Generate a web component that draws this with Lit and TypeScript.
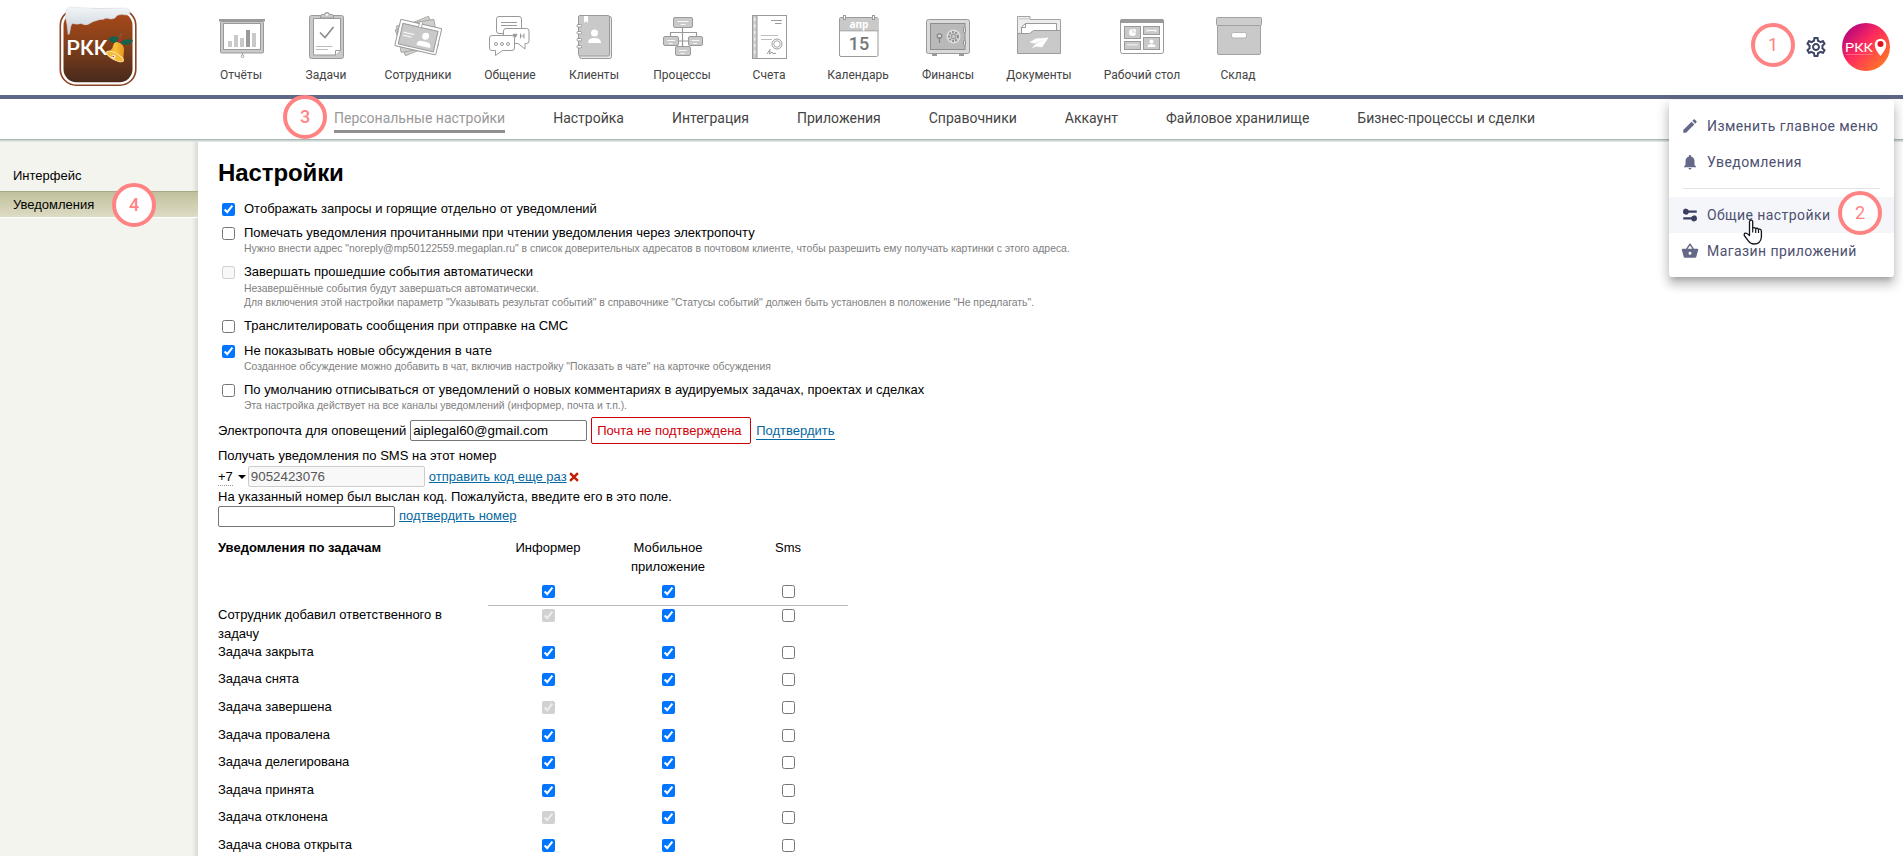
import { LitElement, html, css, svg, nothing, TemplateResult } from "lit";
import { customElement, property } from "lit/decorators.js";
import { classMap } from "lit/directives/class-map.js";

const F = "#c9c9c9";
const S = "#9a9a9a";

interface NavItem {
  label: string;
  cx: number;
  art: TemplateResult;
}

/* The icon artwork shares one coordinate space; each icon is cropped around its own centre. */
const NAV: NavItem[] = [
  {
    label: "Отчёты",
    cx: 241,
    art: svg`<rect x="220.5" y="21.5" width="43" height="31.5" rx="1" fill=${F} stroke=${S}/>
      <rect x="223.5" y="23.500" width="37" height="26" fill="#fff" stroke=${S}/>
      <rect x="219" y="19" width="46" height="2.500" fill=${S}/>
      <path d="M228 41h4v6h-4zM234 35h4v12h-4zM240 38h4v9h-4zM252 33h4v14h-4z" fill=${F}/>
      <path d="M246 30h4v17h-4z" fill=${S}/>
      <path d="M242.500 53v2" stroke=${S}/><circle cx="242.500" cy="56.300" r="1.300" fill="#fff" stroke=${S} stroke-width=".9"/>`,
  },
  {
    label: "Задачи",
    cx: 326,
    art: svg`<rect x="309.500" y="15.500" width="34" height="43" rx="2" fill=${F} stroke=${S}/>
      <path d="M313.500 18.500h27v32l-5 4.500h-22z" fill="#fff" stroke=${S}/>
      <path d="M335.500 55v-4.500h5" fill="#fff" stroke=${S}/>
      <path d="M320.500 18v-2q0-1.500 2-1.500h2q0-2 2.500-2t2.500 2h2q2 0 2 1.500v2z" fill=${F} stroke=${S}/>
      <circle cx="327" cy="14.800" r="1" fill="#fff"/>
      <path d="M320 32.500l5 5 8.500-10.500" fill="none" stroke="#8c8c8c" stroke-width="1.700"/>
      <path d="M316 46.500h16.500M316 49.500h12" stroke="#bbb"/>`,
  },
  {
    label: "Сотрудники",
    cx: 418,
    art: svg`<g stroke="#a6aaa2" fill="#cfcfcf"><rect x="399" y="22" width="36" height="28" rx="1" transform="rotate(-22 417 36)"/>
      <rect x="398.500" y="22.500" width="38" height="27" rx="1" transform="rotate(-10 417 36)"/></g>
      <g transform="rotate(13 418 36)"><rect x="397.500" y="23.500" width="42" height="27" rx="1" fill="#fff" stroke=${S}/>
      <rect x="400.500" y="27" width="36" height="21" fill=${F} stroke=${S}/>
      <path d="M403 35.500h11M403 38.500h9" stroke="#f4f4f4" stroke-width="1.200"/>
      <circle cx="425.500" cy="34.500" r="3.500" fill="#fff"/><path d="M418.500 45q0-5 4-5h6q4 0 4 5z" fill="#fff"/>
      <path d="M416.500 22v5q1.500 1.500 3 0v-5" fill="#fff" stroke=${S} stroke-width=".8"/></g>`,
  },
  {
    label: "Общение",
    cx: 510,
    art: svg`<rect x="496.500" y="16.500" width="25" height="17" rx="2.500" fill="#fff" stroke=${S}/>
      <path d="M501 22.500h16M501 25.500h16" stroke=${S}/>
      <path d="M506 28.500h20.500q2.500 0 2.500 2.500v10q0 2.500-2.500 2.500h-1.500v5.500l-7-5.500h-12q-2.500 0-2.500-2.500v-10q0-2.500 2.500-2.500z" fill="#fff" stroke=${S}/>
      <path d="M512.800 34.200q1.300-1.400 2.200 0 .9-1.400 2.200 0 .6 1.300-2.200 3.600-2.800-2.300-2.200-3.600z" fill=${S}/>
      <path d="M507.500 35.500h3M520.500 33.500v5M524 33.500v5M520.500 36h3.500" stroke=${S}/>
      <path d="M492 35.500h20q2.500 0 2.500 2.500v10q0 2.500-2.500 2.500h-9.500l-7 5v-5h-3.500q-2.500 0-2.500-2.500v-10q0-2.500 2.500-2.500z" fill="#fff" stroke=${S}/>
      <g fill="none" stroke=${S}><circle cx="496" cy="44" r="1.500"/><circle cx="502" cy="44" r="1.500"/><circle cx="508" cy="44" r="1.500"/></g>`,
  },
  {
    label: "Клиенты",
    cx: 594,
    art: svg`<rect x="579.500" y="16.500" width="32" height="42" rx="2" fill="#e8e8e8" stroke=${S}/>
      <rect x="578.500" y="15.500" width="31" height="40.500" rx="1.500" fill=${F} stroke=${S}/>
      <path d="M584 16h4v7l-2-1.800-2 1.800z" fill="#fff"/>
      <g fill="#fff" stroke=${S}><rect x="577" y="24.500" width="4.500" height="2.500" rx="1"/><rect x="577" y="31.500" width="4.500" height="2.500" rx="1"/><rect x="577" y="38.500" width="4.500" height="2.500" rx="1"/><rect x="577" y="45.500" width="4.500" height="2.500" rx="1"/></g>
      <circle cx="594.500" cy="33" r="3.500" fill="#fff"/><path d="M588 43q0-5 6.500-5t6.500 5z" fill="#fff"/>`,
  },
  {
    label: "Процессы",
    cx: 682,
    art: svg`<path d="M682.500 27v20M670.500 37v-4.500h26v4.500M678 41h10" fill="none" stroke=${S} stroke-width="1.200"/>
      <g fill=${F} stroke=${S}><rect x="673.500" y="17.500" width="19" height="10" rx="1.500"/><rect x="663.500" y="36.500" width="15" height="9" rx="1.500"/><rect x="688.500" y="36.500" width="14" height="9" rx="1.500"/><rect x="675.500" y="46.500" width="15" height="9" rx="1.500"/></g>
      <path d="M677.500 21.500h11M680.500 24.500h5M667 40.500h8M668.500 43.500h4M691.500 40.500h8M693 43.500h4M679 50.500h8M680.500 53.500h4" stroke="#f6f6f6"/>`,
  },
  {
    label: "Счета",
    cx: 769,
    art: svg`<rect x="752.500" y="15.500" width="34" height="43" fill="#fff" stroke=${S}/>
      <rect x="752.500" y="15.500" width="4.500" height="43" fill=${F} stroke=${S}/>
      <path d="M754.800 18v39" stroke="#fff" stroke-dasharray="3 3.500"/>
      <path d="M771 20.500h11M775 23.500h6.500" stroke=${S}/><path d="M761 35.500h17M761 39.500h11" stroke="#bdbdbd"/>
      <circle cx="777" cy="44" r="5" fill="#fff" stroke=${S}/><circle cx="777" cy="44" r="3.200" fill="none" stroke="#ababab"/>
      <path d="M767 54l3-4.500-.5 4.500 2.500-2 1 1.700 3-.5" fill="none" stroke=${S}/>`,
  },
  {
    label: "Календарь",
    cx: 858,
    art: svg`<rect x="839.500" y="17.500" width="38.500" height="39" rx="1.500" fill="#fff" stroke=${S}/>
      <path d="M840 18h37.500v12.500h-37.500z" fill=${F}/><path d="M840 30.800h38" stroke=${S}/>
      <g fill="#fff" stroke=${S}><rect x="843.500" y="15.500" width="2" height="4"/><rect x="872.500" y="15.500" width="2" height="4"/></g>
      <text x="859" y="28" class="cal-m">апр</text><text x="859" y="50" class="cal-d">15</text>`,
  },
  {
    label: "Финансы",
    cx: 948,
    art: svg`<path d="M932 53.500h5v2.500h-5zM959 53.500h5v2.500h-5z" fill=${S}/>
      <rect x="926.500" y="19.500" width="43" height="34" rx="2" fill="#dadada" stroke=${S}/>
      <rect x="930.500" y="23.500" width="34.500" height="26" fill="#b9b9b9" stroke="#8e8e8e"/>
      <circle cx="953.500" cy="36.500" r="7" fill="#dedede"/><circle cx="953.500" cy="36.500" r="4.500" fill="none" stroke="#8e8e8e" stroke-width="2" stroke-dasharray="2 1.200"/><circle cx="953.500" cy="36.500" r="2.500" fill="#c4c4c4" stroke="#8e8e8e"/>
      <circle cx="939.500" cy="36" r="2.200" fill="#dedede" stroke="#858585" stroke-width="1.300"/><path d="M939.500 37v6" stroke="#858585" stroke-width="1.200"/>
      <g fill="#dedede" stroke="#8e8e8e"><rect x="963.500" y="27.500" width="2" height="5" rx="1"/><rect x="963.500" y="40.500" width="2" height="5" rx="1"/></g>`,
  },
  {
    label: "Документы",
    cx: 1039,
    art: svg`<path d="M1017.500 53v-36.500h12.500v3h30.500v33.500z" fill="#ededed" stroke=${S} stroke-width=".9"/>
      <path d="M1019 18.800h10" stroke="#c8c8c8"/>
      <path d="M1021.500 36v-9l4-3.500h31v12z" fill="#fff" stroke=${S}/><path d="M1021.500 27.500h4v-4" fill="none" stroke=${S}/>
      <path d="M1017.500 53.500v-20h12l4-3h27v23z" fill=${F} stroke=${S} stroke-linejoin="round"/>
      <path d="M1048 38l-12 .8-6 3.400 4.500 1zM1048 38l-12 5.700-3.500 4 3.500-1.500 6 .8z" fill="#fff" stroke="#fff" stroke-width=".5"/>`,
  },
  {
    label: "Рабочий стол",
    cx: 1142,
    art: svg`<rect x="1120.500" y="19.500" width="43" height="34" rx="2" fill="#fff" stroke=${S}/>
      <path d="M1120 23v-2q0-2 2-2h40q2 0 2 2v2z" fill=${S}/>
      <g fill=${F} stroke=${S}><rect x="1124.500" y="26.500" width="16" height="12"/><rect x="1143.500" y="26.500" width="16" height="8"/><rect x="1124.500" y="41.500" width="16" height="8"/><rect x="1143.500" y="37.500" width="16" height="12"/></g>
      <path d="M1132.500 32.500v-3.500a3.500 3.500 0 1 0 3.500 3.500z" fill="#fff"/><path d="M1133.300 31.700v-2.900a3 3 0 0 1 2.900 2.900z" fill="#fff"/>
      <g fill="none" stroke="#fff"><circle cx="1147.500" cy="30.500" r="1"/><circle cx="1155.500" cy="30.500" r="1"/><path d="M1148.500 30.500h6M1127 45.500l1.500-1.500 1.500 1.500 1.500-1.500 1.500 1.500 1.500-1.500 1.500 1.500 1.500-1.500"/></g>
      <circle cx="1151.500" cy="41.500" r="2" fill="#fff"/><path d="M1147.500 47q0-3 4-3t4 3z" fill="#fff"/>`,
  },
  {
    label: "Склад",
    cx: 1238,
    art: svg`<rect x="1217.500" y="24" width="43" height="30.500" rx="1.500" fill=${F} stroke="#a3a0a0"/>
      <rect x="1216.500" y="17.500" width="45" height="8" rx="1" fill="#cdcdcd" stroke="#a3a0a0"/>
      <rect x="1231.500" y="32.500" width="15" height="5.500" rx="2" fill="#fff" stroke="#b5b5b5"/>`,
  },
];

const SECTIONS = ["Персональные настройки", "Настройка", "Интеграция", "Приложения", "Справочники", "Аккаунт", "Файловое хранилище", "Бизнес-процессы и сделки"];

interface Option {
  label: string;
  on?: boolean;
  locked?: boolean;
  hints?: string[];
}

const OPTIONS: Option[] = [
  { label: "Отображать запросы и горящие отдельно от уведомлений", on: true },
  {
    label: "Помечать уведомления прочитанными при чтении уведомления через электропочту",
    hints: ['Нужно внести адрес "noreply@mp50122559.megaplan.ru" в список доверительных адресатов в почтовом клиенте, чтобы разрешить ему получать картинки с этого адреса.'],
  },
  {
    label: "Завершать прошедшие события автоматически",
    locked: true,
    hints: [
      "Незавершённые события будут завершаться автоматически.",
      'Для включения этой настройки параметр "Указывать результат событий" в справочнике "Статусы событий" должен быть установлен в положение "Не предлагать".',
    ],
  },
  { label: "Транслителировать сообщения при отправке на СМС" },
  { label: "Не показывать новые обсуждения в чате", on: true, hints: ['Созданное обсуждение можно добавить в чат, включив настройку "Показать в чате" на карточке обсуждения'] },
  {
    label: "По умолчанию отписываться от уведомлений о новых комментариях в аудируемых задачах, проектах и сделках",
    hints: ["Эта настройка действует на все каналы уведомлений (информер, почта и т.п.)."],
  },
];

/* [event, informer is locked on] */
const EVENTS: [string, boolean][] = [
  ["Сотрудник добавил ответственного в задачу", true],
  ["Задача закрыта", false],
  ["Задача снята", false],
  ["Задача завершена", true],
  ["Задача провалена", false],
  ["Задача делегирована", false],
  ["Задача принята", false],
  ["Задача отклонена", true],
  ["Задача снова открыта", false],
];

const PENCIL = "M3 17.250V21h3.750L17.810 9.940l-3.750-3.750L3 17.250zM20.710 7.040c.39-.39.39-1.020 0-1.410l-2.340-2.340c-.39-.39-1.020-.39-1.410 0l-1.830 1.830 3.750 3.750 1.830-1.830z";
const BELL = "M12 22c1.100 0 2-.9 2-2h-4c0 1.100.9 2 2 2zm6-6v-5c0-3.070-1.630-5.640-4.500-6.320V4c0-.83-.67-1.500-1.500-1.500s-1.500.67-1.500 1.500v.68C7.640 5.360 6 7.920 6 11v5l-2 2v1h16v-1l-2-2z";
const SLIDERS = "M6.700 3.500a4 4 0 0 1 3.700 2.500H21v3H10.400a4 4 0 1 1-3.700-5.500zM17.300 12.500a4 4 0 1 1-3.700 5.500H3v-3h10.600a4 4 0 0 1 3.700-2.500z";
const BASKET = "M17.210 9l-4.380-6.560c-.19-.28-.51-.42-.83-.42-.32 0-.64.14-.83.43L6.790 9H2c-.55 0-1 .45-1 1 0 .09.01.18.04.27l2.540 9.270c.23.84 1 1.460 1.920 1.460h13c.92 0 1.690-.62 1.930-1.460l2.540-9.270L23 10c0-.55-.45-1-1-1h-4.790zM9 9l3-4.400L15 9H9zm3 8c-1.100 0-2-.9-2-2s.9-2 2-2 2 .9 2 2-.9 2-2 2z";
const GEAR = "M19.430 12.980c.04-.32.07-.64.07-.98 0-.34-.03-.66-.07-.98l2.110-1.650c.19-.15.24-.42.12-.64l-2-3.460c-.09-.16-.26-.25-.44-.25-.06 0-.12.01-.17.03l-2.490 1c-.52-.4-1.080-.73-1.690-.98l-.38-2.650C14.460 2.180 14.250 2 14 2h-4c-.25 0-.46.18-.49.42l-.38 2.650c-.61.25-1.170.59-1.690.98l-2.490-1c-.06-.02-.12-.03-.18-.03-.17 0-.34.09-.43.25l-2 3.460c-.13.22-.07.49.12.64l2.110 1.650c-.04.32-.07.65-.07.98 0 .33.03.66.07.98l-2.110 1.650c-.19.15-.24.42-.12.64l2 3.460c.09.16.26.25.44.25.06 0 .12-.01.17-.03l2.490-1c.52.4 1.080.73 1.690.98l.38 2.650c.03.24.24.42.49.42h4c.25 0 .46-.18.49-.42l.38-2.650c.61-.25 1.170-.59 1.690-.98l2.490 1c.06.02.12.03.18.03.17 0 .34-.09.43-.25l2-3.460c.12-.22.07-.49-.12-.64l-2.110-1.650zm-1.980-1.710c.04.31.05.52.05.73 0 .21-.02.43-.05.73l-.14 1.130.89.7 1.080.84-.7 1.210-1.270-.51-1.040-.42-.9.68c-.43.32-.84.56-1.250.73l-1.060.43-.16 1.130-.2 1.350h-1.400l-.19-1.350-.16-1.130-1.060-.43c-.43-.18-.83-.41-1.230-.71l-.91-.7-1.060.43-1.270.51-.7-1.210 1.080-.84.89-.7-.14-1.130c-.03-.31-.05-.54-.05-.74s.02-.43.05-.73l.14-1.130-.89-.7-1.080-.84.7-1.210 1.270.51 1.040.42.9-.68c.43-.32.84-.56 1.250-.73l1.060-.43.16-1.130.2-1.350h1.390l.19 1.350.16 1.130 1.060.43c.43.18.83.41 1.230.71l.91.7 1.060-.43 1.270-.51.7 1.210-1.070.85-.89.7.14 1.130zM12 8c-2.210 0-4 1.790-4 4s1.790 4 4 4 4-1.790 4-4-1.790-4-4-4zm0 6c-1.100 0-2-.9-2-2s.9-2 2-2 2 .9 2 2-.9 2-2 2z";

@customElement("top-bar")
export class TopBar extends LitElement {
  static styles = css`
    :host { display: flex; height: 95px; background: #fff; border-bottom: 4px solid #5f6788; }
    .logo { width: 80px; height: 86px; margin: 3px 61px 0 58px; }
    .logo-text { font: 500 20px Roboto, sans-serif; fill: #fff; }
    nav { display: grid; grid-template-columns: 84px 86px 98px 86px 82px 94px 80px 98px 82px 100px 106px 86px; }
    .item { display: flex; flex-direction: column; align-items: center; padding-top: 8px; text-decoration: none; color: #444; font: 12px/18px Roboto, sans-serif; white-space: nowrap; }
    .item svg { display: block; width: 60px; height: 52px; margin-bottom: 6px; }
    .cal-m { font: bold 10px "Open Sans", sans-serif; fill: #fff; text-anchor: middle; }
    .cal-d { font: 500 18px Roboto, sans-serif; fill: #777; text-anchor: middle; }
    .user { display: flex; align-items: center; gap: 14px; margin-left: auto; padding: 0 13px 1px 0; }
    .gear { width: 24px; height: 24px; fill: #3f4565; }
    .avatar { width: 48px; height: 48px; }
    .avatar-text { font: 13.500px Roboto, sans-serif; fill: #fff; }
  `;
  render() {
    return html`
      <svg class="logo" viewBox="58 3 80 86">
        <defs>
          <linearGradient id="wood" x2="0" y2="1"><stop offset="0" stop-color="#a8481a" /><stop offset=".45" stop-color="#84401a" /><stop offset="1" stop-color="#47291c" /></linearGradient>
          <linearGradient id="snow" x2="0" y2="1"><stop offset="0" stop-color="#f3f6f8" /><stop offset="1" stop-color="#c6ced5" /></linearGradient>
          <linearGradient id="brass"><stop offset="0" stop-color="#e08a12" /><stop offset=".5" stop-color="#fbc23c" /><stop offset="1" stop-color="#e3951d" /></linearGradient>
        </defs>
        <rect x="60.300" y="9.500" width="75.500" height="75.700" rx="16" fill="#fff" stroke="#8b4423" stroke-width="1.600" />
        <rect x="63.500" y="12.500" width="69" height="69.700" rx="13" fill="url(#wood)" />
        <path d="M66 10Q67 7 71 7L97 8.500 124 8Q130 8.500 130 12 129.500 15.500 126 15 121 14 117 15.500 115 19.500 110 19 106 17.500 103 19.500 100 19 97 20.500 93 21 89 24 85 26 81 23.500 77 25 73 23.500 71 24 70.500 28L69.500 34 68 34.500 67 25 65.500 17z" fill="url(#snow)" stroke="#d3dae0" stroke-width=".4" />
        <text class="logo-text" x="66.500" y="54.500" textLength="41" lengthAdjust="spacingAndGlyphs">РКК</text>
        <path d="M122 33l-4 8" stroke="#8c5436" stroke-width="2" />
        <path d="M108 39q5-5 11-1l3 3q4-3 11-1-2 6-10 4.500-4 0-5-2-6 2-10-3.500z" fill="#16624a" />
        <circle cx="119.500" cy="40.500" r="1.900" fill="#c8242a" />
        <path d="M117 42q8 2 7 9-1 6 0 10-8 1-17.500-9 6-2 6.500-6 1-4 4-4z" fill="url(#brass)" />
        <ellipse cx="115" cy="56.500" rx="9.500" ry="3.300" transform="rotate(28 115 56.500)" fill="#f6b937" stroke="#fbe6a4" />
        <circle cx="113.500" cy="56.800" r="2" fill="#fff6e0" /><circle cx="113.300" cy="56.500" r=".8" fill="#c22" />
      </svg>
      <nav>
        ${NAV.map((n) => html`<a class="item"><svg viewBox="${n.cx - 30} 8 60 52">${n.art}</svg>${n.label}</a>`)}
      </nav>
      <div class="user">
        <svg class="gear" viewBox="0 0 24 24"><path d=${GEAR} /></svg>
        <svg class="avatar" viewBox="0 0 48 48">
          <defs><linearGradient id="sunset" x1=".1" y1=".1" x2=".9" y2=".9"><stop offset="0" stop-color="#b3047f" /><stop offset=".45" stop-color="#ff2c5c" /><stop offset="1" stop-color="#ff7a24" /></linearGradient></defs>
          <circle cx="24" cy="24" r="24" fill="url(#sunset)" />
          <text class="avatar-text" x="3" y="28.500" textLength="28" lengthAdjust="spacingAndGlyphs">РКК</text>
          <path d="M4 31.500h27" stroke="#ff7f9c" stroke-width=".7" />
          <path d="M38.500 33q-5.800-7-5.800-11.500a5.800 5.800 0 0 1 11.600 0q0 4.500-5.800 11.500z" fill="#fff" />
          <circle cx="38.500" cy="21" r="3" fill="#e30f1f" />
        </svg>
      </div>
    `;
  }
}

@customElement("section-bar")
export class SectionBar extends LitElement {
  static styles = css`
    :host { display: flex; gap: 48px; height: 40px; padding-left: 334px; background: #fff; font: 14px/20px Roboto, sans-serif; color: #444; white-space: nowrap; }
    .tab { margin-top: 9px; height: 22px; }
    .tab.current { color: #999; border-bottom: 3px solid #8f8f8f; }
  `;
  render() {
    return SECTIONS.map((s, i) => html`<span class=${classMap({ tab: true, current: i === 0 })}>${s}</span>`);
  }
}

@customElement("step-mark")
export class StepMark extends LitElement {
  @property() n = "";
  static styles = css`
    :host { display: flex; box-sizing: border-box; width: 44px; height: 44px; align-items: center; justify-content: center; border: 4px solid #ff8383; border-radius: 50%; background: #fff; color: #ff8383; font: 500 18px/1 Roboto, sans-serif; }
  `;
  render() {
    return html`${this.n}`;
  }
}

@customElement("gear-menu")
export class GearMenu extends LitElement {
  static styles = css`
    :host { display: block; box-sizing: border-box; width: 225px; padding: 8px 0; background: #fff; border-radius: 3px; box-shadow: 0 5px 5px -3px rgba(0,0,0,.2), 0 8px 10px 1px rgba(0,0,0,.14), 0 3px 14px 2px rgba(0,0,0,.12); font: 14px/36px Roboto, sans-serif; letter-spacing: .42px; color: #4d5070; white-space: nowrap; }
    .row { display: flex; align-items: center; gap: 8px; height: 36px; padding-left: 12px; }
    .row svg { width: 18px; height: 18px; fill: #656987; }
    .row.hover { background: #f5f6fa; }
    .row.hover svg { fill: #3b3f5f; }
    .rule { height: 1px; margin: 8px 14px; background: #e2e3e6; }
  `;
  private row(d: string, label: string, hover = false) {
    return html`<div class=${classMap({ row: true, hover })}><svg viewBox="0 0 24 24"><path d=${d} /></svg>${label}</div>`;
  }
  render() {
    return html`${this.row(PENCIL, "Изменить главное меню")}${this.row(BELL, "Уведомления")}
      <div class="rule"></div>
      ${this.row(SLIDERS, "Общие настройки", true)}${this.row(BASKET, "Магазин приложений")}`;
  }
}

@customElement("side-bar")
export class SideBar extends LitElement {
  static styles = css`
    :host { display: block; box-sizing: border-box; width: 198px; padding-top: 21px; background: linear-gradient(to left, #d9dad3, rgba(244,244,239,0) 6px), #f4f4ef; font: 13px/26px "Liberation Sans", Arial, sans-serif; color: #000; }
    .item { padding-left: 13px; height: 28px; }
    .item.current { height: 25px; line-height: 25px; background: linear-gradient(#c1c09c, #dddcc5); border-top: 1px solid #aaa986; border-bottom: 1px solid #fff; }
  `;
  render() {
    return html`<div class="item">Интерфейс</div><div class="item current">Уведомления</div>`;
  }
}

@customElement("settings-page")
export class SettingsPage extends LitElement {
  static styles = css`
    :host { display: block; padding: 16px 0 0 20px; background: #fff; font: 13px/1.4 "Liberation Sans", Arial, sans-serif; color: #000; }
    h1 { margin: 0 0 11.500px; font-size: 24px; line-height: 30px; letter-spacing: -.1px; }
    input[type="checkbox"] { display: block; width: 13px; height: 13px; margin: 0; }
    .option { display: grid; grid-template-columns: 26px 1fr; padding-bottom: 6.500px; }
    .option input { margin: 3px 0 0 4px; }
    .hint { font-size: 10.400px; color: #808080; }
    .field { box-sizing: border-box; width: 177px; height: 21px; margin: 0; padding: 1px 2px; border: 1px solid #767676; border-radius: 2px; font: 13.333px "Liberation Sans", Arial, sans-serif; background: #fff; color: #000; }
    .field:disabled { background: #f8f8f8; border-color: #cdcdcd; color: #555; }
    .line { display: flex; align-items: center; gap: 4px; }
    .email { height: 27px; margin: -3px 0 3px; }
    .warn { box-sizing: border-box; width: 160px; height: 27px; margin-right: 1px; padding-left: 5px; border: 1px solid #d0000a; border-radius: 2px; line-height: 25px; color: #d0000a; }
    .link { color: #0568a0; text-decoration: underline; }
    .link.boxed { text-decoration: none; border-bottom: 1px solid #0568a0; line-height: 16px; margin-top: 1px; }
    .phone { height: 22px; }
    .code { border-bottom: 1px dotted #999; line-height: 17px; }
    .caret { width: 8px; height: 4px; margin: 0 -1px 0 1px; }
    .phone .field { margin-left: -1px; }
    .cross { width: 10px; height: 10px; margin-left: -2px; }
    .verify { height: 21px; }
    .matrix { display: grid; grid-template-columns: 270px repeat(3, 120px); margin-top: 12.500px; }
    .matrix input { margin: 3px auto 0; }
    .group { font-weight: bold; }
    .channel { width: 80px; height: 44px; margin: 0 auto; text-align: center; }
    .master { height: 22px; border-bottom: 1px solid #b8b8b8; }
    .master input { margin-top: 2px; }
    .event { min-height: 27.640px; padding-right: 40px; }
    .event.tall { min-height: 36px; }
  `;
  render() {
    return html`
      <h1>Настройки</h1>
      ${OPTIONS.map(
        (o) => html`<div class="option">
          <input type="checkbox" .checked=${!!o.on} ?disabled=${!!o.locked} />
          <div>${o.label}${o.hints ? o.hints.map((h) => html`<div class="hint">${h}</div>`) : nothing}</div>
        </div>`
      )}
      <div class="line email">
        <span>Электропочта для оповещений</span>
        <input class="field" .value=${"aiplegal60@gmail.com"} />
        <span class="warn">Почта не подтверждена</span>
        <a class="link boxed">Подтвердить</a>
      </div>
      <div>Получать уведомления по SMS на этот номер</div>
      <div class="line phone">
        <span class="code">+7</span>
        <svg class="caret" viewBox="0 0 8 4"><path d="M0 0h8L4 4z" /></svg>
        <input class="field" disabled .value=${"9052423076"} />
        <a class="link">отправить код еще раз</a>
        <svg class="cross" viewBox="0 0 9 9"><path d="M1 1l7 7M8 1L1 8" stroke="#c41c00" stroke-width="2.200" /></svg>
      </div>
      <div>На указанный номер был выслан код. Пожалуйста, введите его в это поле.</div>
      <div class="line verify">
        <input class="field" />
        <a class="link">подтвердить номер</a>
      </div>
      <div class="matrix">
        <div class="group">Уведомления по задачам</div>
        <div class="channel">Информер</div>
        <div class="channel">Мобильное приложение</div>
        <div class="channel">Sms</div>
        <div></div>
        ${[true, true, false].map((on) => html`<div class="master"><input type="checkbox" .checked=${on} /></div>`)}
        ${EVENTS.map(
          ([name, locked], i) => html`<div class=${classMap({ event: true, tall: i === 0 })}>${name}</div>
            <input type="checkbox" .checked=${true} ?disabled=${locked} />
            <input type="checkbox" .checked=${true} />
            <input type="checkbox" />`
        )}
      </div>
    `;
  }
}

@customElement("app-root")
export class AppRoot extends LitElement {
  static styles = css`
    :host { display: flex; flex-direction: column; position: relative; height: 856px; overflow: hidden; background: #fff; }
    .edge { flex: none; height: 3px; background: linear-gradient(#adb8b5 0 1px, #cbd6d2 1px 2px, #dfe7e4 2px); }
    top-bar, section-bar { flex: none; }
    .body { flex: 1; min-height: 0; display: grid; grid-template-columns: 198px 1fr; overflow: hidden; }
    gear-menu { position: absolute; left: 1669px; top: 100px; }
    step-mark { position: absolute; }
    .s1 { left: 1751px; top: 23px; font-weight: 400; }
    .s2 { left: 1838px; top: 191px; font-weight: 400; }
    .s3 { left: 283px; top: 95px; }
    .s4 { left: 112px; top: 183px; }
    .pointer { position: absolute; left: 1743px; top: 219px; width: 20px; height: 26px; }
  `;
  render() {
    return html`
      <top-bar></top-bar>
      <section-bar></section-bar>
      <div class="edge"></div>
      <div class="body">
        <side-bar></side-bar>
        <settings-page></settings-page>
      </div>
      <gear-menu></gear-menu>
      <step-mark class="s1" n="1"></step-mark>
      <step-mark class="s2" n="2"></step-mark>
      <step-mark class="s3" n="3"></step-mark>
      <step-mark class="s4" n="4"></step-mark>
      <svg class="pointer" viewBox="0 0 20 26">
        <path d="M6.500 16V3q0-1.800 1.600-1.800T9.700 3v6q1.500-1 3 .5 1.500-.8 2.800.7 2.800-.6 2.900 2.300v5.500q-.2 3.500-2.400 5.500-1.500 1.500-5 1.500-3.600 0-5.500-2.800L1.300 16.500q-.5-2 1.200-2.300 1.500-.2 4 2.300z" fill="#fff" stroke="#15151f" stroke-width="1.300" stroke-linejoin="round" />
        <path d="M9.700 9v4.500M12.700 9.500V14M15.500 10.200V14" stroke="#15151f" stroke-width="1.200" />
      </svg>
    `;
  }
}
